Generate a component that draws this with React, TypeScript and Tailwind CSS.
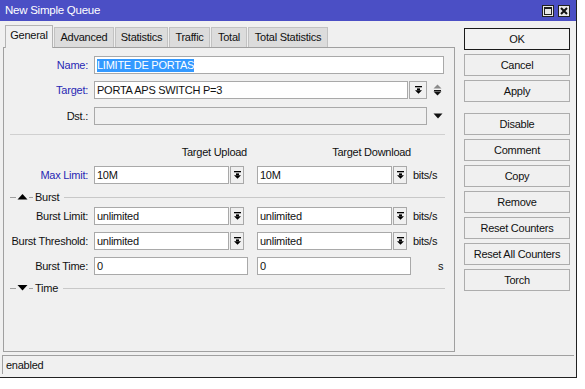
import React from "react";

const FONT = "font-['Liberation_Sans',Arial,sans-serif] text-[11px] tracking-[-0.25px]";

// small arrow with a bar on top, as on the winbox drop buttons
const DropIcon = () => (
  <svg width="7" height="8" viewBox="0 0 7 8">
    <rect x="0" y="0" width="7" height="1.3" fill="#000" />
    <rect x="2" y="2.4" width="3" height="1.8" fill="#000" />
    <path d="M0 4.2h7L3.5 7.8z" fill="#000" />
  </svg>
);

const DropBtn: React.FC<{ w?: string }> = ({ w = "w-[14px]" }) => (
  <div
    className={`${w} h-[18px] ml-px border border-[#a9a9a9] bg-[#f0f0f0] flex items-center justify-center`}
  >
    <DropIcon />
  </div>
);

const Field: React.FC<{
  w: string;
  value?: string;
  disabled?: boolean;
  selected?: boolean;
}> = ({ w, value, disabled, selected }) => (
  <div
    className={`${w} h-[18px] border border-[#a9a9a9] flex items-center px-[2px] ${
      disabled ? "bg-[#f0f0f0]" : "bg-white"
    }`}
  >
    {selected ? (
      <span className="bg-[#3399ff] text-white leading-[13px]">{value}</span>
    ) : (
      <span className="text-[#111]">{value}</span>
    )}
  </div>
);

const Label: React.FC<{ text: string; blue?: boolean }> = ({ text, blue }) => (
  <div
    className={`w-[84px] text-right ${blue ? "text-[#2828b4]" : "text-[#111]"}`}
  >
    {text}
  </div>
);

const Row: React.FC<{ className?: string; children: React.ReactNode }> = ({
  className = "",
  children,
}) => <div className={`flex items-center h-[18px] ${className}`}>{children}</div>;

const Section: React.FC<{ title: string; open?: boolean; className?: string }> = ({
  title,
  open,
  className = "",
}) => (
  <div className={`flex items-center h-[14px] ml-[6px] mr-[9px] ${className}`}>
    <div className="w-[6px] h-px bg-[#a0a0a0]" />
    <svg width="11" height="6" viewBox="0 0 11 6" className="mx-px">
      {open ? (
        <path d="M0.5 0h10L5.5 5.5z" fill="#000" />
      ) : (
        <path d="M0.5 5.5h10L5.5 0z" fill="#000" />
      )}
    </svg>
    <div className="w-[4px] h-px bg-[#a0a0a0]" />
    <span className="ml-[2px] mr-[5px] text-[#111]">{title}</span>
    <div className="flex-1 h-px bg-[#c8c8c8]" />
  </div>
);

const tabs = [
  { name: "General", w: "w-[48px]" },
  { name: "Advanced", w: "w-[60px]" },
  { name: "Statistics", w: "w-[53px]" },
  { name: "Traffic", w: "w-[41px]" },
  { name: "Total", w: "w-[36px]" },
  { name: "Total Statistics", w: "w-[80px]" },
];

const buttons = [
  "OK",
  "Cancel",
  "Apply",
  "Disable",
  "Comment",
  "Copy",
  "Remove",
  "Reset Counters",
  "Reset All Counters",
  "Torch",
];

export default function App() {
  return (
    <div className={`w-[585px] h-[389px] bg-white ${FONT}`}>
      <div className="w-[577px] h-[378px] bg-[#f0f0f0] border-r border-b border-[#222] flex flex-col">
        {/* title bar */}
        <div className="h-[21px] bg-[#4b4fc5] flex items-center pl-[5px] pr-[5px] text-white">
          <span className="flex-1 text-[11.5px]">New Simple Queue</span>
          <div className="w-[12px] h-[12px] bg-[#e8e8e8] border border-[#222] flex items-center justify-center mr-[4px]">
            <div className="w-[8px] h-[8px] border border-[#222] border-t-2" />
          </div>
          <div className="w-[12px] h-[12px] bg-[#e8e8e8] border border-[#222] flex items-center justify-center mr-[1px]">
            <svg width="8" height="8" viewBox="0 0 8 8">
              <path d="M1 1L7 7M7 1L1 7" stroke="#111" strokeWidth="2" />
            </svg>
          </div>
        </div>

        {/* main area */}
        <div className="h-[331px] flex">
          <div className="pl-[3px] pt-[4px]">
            {/* tabs */}
            <div className="h-[22px] flex items-end pl-[2px] gap-px relative z-10">
              {tabs.map((t, i) =>
                i === 0 ? (
                  <div
                    key={t.name}
                    className={`${t.w} h-[23px] -mb-px bg-[#f0f0f0] border border-b-0 border-[#b4b4b4] flex items-center justify-center text-[#111] pb-[3px]`}
                  >
                    {t.name}
                  </div>
                ) : (
                  <div
                    key={t.name}
                    className={`${t.w} h-[20px] bg-[#dcdcdc] border border-b-0 border-[#c2c2c2] flex items-center justify-center text-[#111]`}
                  >
                    {t.name}
                  </div>
                )
              )}
            </div>

            {/* panel */}
            <div className="w-[452px] h-[305px] border border-[#a0a0a0] flex flex-col">
              <Row className="mt-[8px]">
                <Label text="Name:" blue />
                <div className="ml-[6px]">
                  <Field w="w-[350px]" value="LIMITE DE PORTAS" selected />
                </div>
              </Row>
              <Row className="mt-[7px]">
                <Label text="Target:" blue />
                <div className="ml-[6px] flex">
                  <Field w="w-[314px]" value="PORTA APS SWITCH P=3" />
                  <DropBtn w="w-[18px]" />
                </div>
                <svg width="9" height="12" viewBox="0 0 9 12" className="ml-[6px]">
                  <path d="M0.5 4.5h8L4.5 0.5z" fill="#8a8a8a" />
                  <rect x="1" y="6" width="7" height="1.2" fill="#111" />
                  <path d="M0.5 7.5h8L4.5 11.5z" fill="#111" />
                </svg>
              </Row>
              <Row className="mt-[8px]">
                <Label text="Dst.:" />
                <div className="ml-[6px]">
                  <Field w="w-[333px]" disabled />
                </div>
                <svg width="10" height="6" viewBox="0 0 10 6" className="ml-[6px]">
                  <path d="M0.5 0.5h9L5 5.5z" fill="#111" />
                </svg>
              </Row>

              <div className="mt-[9px] ml-[6px] mr-[9px] h-px bg-[#d0d0d0]" />

              <div className="mt-[8px] h-[18px] flex items-center text-[#111]">
                <div className="w-[243px] text-right">Target Upload</div>
                <div className="w-[164px] text-right">Target Download</div>
              </div>

              <Row className="mt-[5px]">
                <Label text="Max Limit:" blue />
                <div className="ml-[6px] flex">
                  <Field w="w-[135px]" value="10M" />
                  <DropBtn />
                </div>
                <div className="ml-[13px] flex">
                  <Field w="w-[135px]" value="10M" />
                  <DropBtn />
                </div>
                <span className="ml-[6px] text-[#111]">bits/s</span>
              </Row>

              <Section title="Burst" className="mt-[6px]" />

              <Row className="mt-[3px]">
                <Label text="Burst Limit:" />
                <div className="ml-[6px] flex">
                  <Field w="w-[135px]" value="unlimited" />
                  <DropBtn />
                </div>
                <div className="ml-[13px] flex">
                  <Field w="w-[135px]" value="unlimited" />
                  <DropBtn />
                </div>
                <span className="ml-[6px] text-[#111]">bits/s</span>
              </Row>
              <Row className="mt-[7px]">
                <Label text="Burst Threshold:" />
                <div className="ml-[6px] flex">
                  <Field w="w-[135px]" value="unlimited" />
                  <DropBtn />
                </div>
                <div className="ml-[13px] flex">
                  <Field w="w-[135px]" value="unlimited" />
                  <DropBtn />
                </div>
                <span className="ml-[6px] text-[#111]">bits/s</span>
              </Row>
              <Row className="mt-[7px]">
                <Label text="Burst Time:" />
                <div className="ml-[6px]">
                  <Field w="w-[154px]" value="0" />
                </div>
                <div className="ml-[9px]">
                  <Field w="w-[154px]" value="0" />
                </div>
                <span className="ml-[27px] text-[#111]">s</span>
              </Row>

              <Section title="Time" open className="mt-[6px]" />
            </div>
          </div>

          {/* right buttons */}
          <div className="ml-[9px] pt-[7px] flex flex-col gap-[4px]">
            {buttons.map((b, i) => (
              <div
                key={b}
                className={`w-[106px] h-[22px] flex items-center justify-center text-[#111] ${
                  i === 0
                    ? "border border-[#1a1a1a] bg-[#f2f2f2]"
                    : "border border-[#adadad] bg-[#f0f0f0]"
                } ${i === 3 ? "mt-[7px]" : ""}`}
              >
                {b}
              </div>
            ))}
          </div>
        </div>

        {/* status bar */}
        <div className="mt-[3px] ml-[2px] w-[572px] h-[19px] border-t border-l border-[#a0a0a0] flex items-center pl-[3px] text-[#111]">
          enabled
        </div>
      </div>
    </div>
  );
}
